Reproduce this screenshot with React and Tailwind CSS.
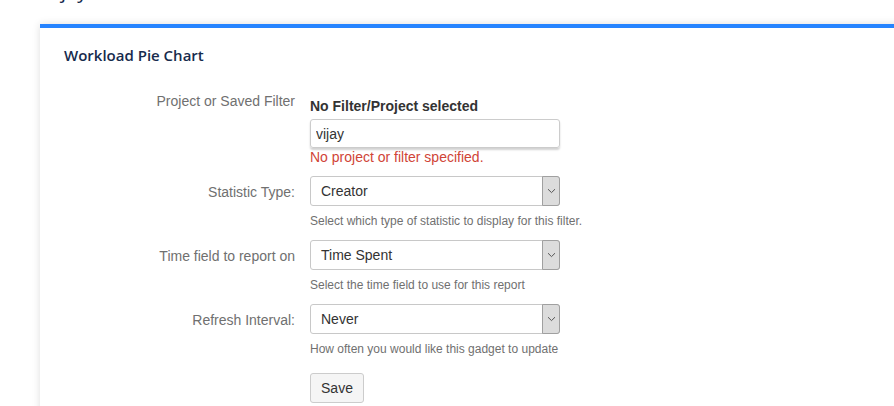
import { useState } from "react";

const Chevron = () => (
  <svg width="9" height="6" viewBox="0 0 9 6" fill="none">
    <path d="M1 1.2 L4.5 4.6 L8 1.2" stroke="#555" strokeWidth="1" />
  </svg>
);

const Select = ({ value }) => (
  <div className="flex h-[30px] w-[250px] items-stretch rounded-[3px] border border-[#c8c8c8] bg-white">
    <div className="flex flex-1 items-center pl-[10px] text-[14px] text-[#333]">{value}</div>
    <div className="my-[-1px] mr-[-1px] flex w-[18px] items-center justify-center rounded-r-[3px] border border-[#a0a0a0] bg-[#dcdcdc]">
      <Chevron />
    </div>
  </div>
);

const Row = ({ label, children, labelClass = "" }) => (
  <div className="flex">
    <div className={"w-[231px] shrink-0 text-right text-[14px] text-[#707070] " + labelClass}>{label}</div>
    <div className="ml-[15px] flex flex-col">{children}</div>
  </div>
);

const App = () => {
  const [query, setQuery] = useState("vijay");

  return (
    <div
      className="h-[406px] w-[894px] overflow-hidden bg-white"
      style={{ fontFamily: '"Liberation Sans", Arial, sans-serif' }}
    >
      <div className="h-[24px] overflow-hidden pl-[46px]">
        <div
          className="mt-[-21px] text-[20px] leading-[24px] text-[#172b4d]"
          style={{ fontFamily: '"Open Sans", sans-serif' }}
        >
          vijay
        </div>
      </div>

      <div className="ml-[40px] mr-[-20px] h-[400px] border-t-4 border-[#2684ff] bg-white pl-[24px] pt-[17px] shadow-[0_0_8px_rgba(0,0,0,0.13)]">
        <h2
          className="text-[15px] font-semibold leading-[20px] text-[#172b4d]"
          style={{ fontFamily: '"Open Sans", sans-serif' }}
        >
          Workload Pie Chart
        </h2>

        <div className="mt-[26px] flex flex-col">
          <Row label="Project or Saved Filter" labelClass="leading-[20px]">
            <div className="pt-[5px] text-[14px] font-bold leading-[20px] text-[#333]">
              No Filter/Project selected
            </div>
            <input
              value={query}
              onChange={(e) => setQuery(e.target.value)}
              className="mt-[3px] h-[29px] w-[250px] rounded-[3px] border border-[#cccccc] px-[5px] text-[14px] text-[#333] shadow-[0_2px_2px_rgba(0,0,0,0.18)] outline-none"
            />
            <div className="text-[14px] leading-[19px] text-[#d04437]">No project or filter specified.</div>
          </Row>

          <div className="mt-[9px]">
            <Row label="Statistic Type:" labelClass="leading-[30px] pt-[1px]">
              <Select value="Creator" />
              <div className="mt-[7px] text-[12px] leading-[16px] text-[#707070]">
                Select which type of statistic to display for this filter.
              </div>
            </Row>
          </div>

          <div className="mt-[11px]">
            <Row label="Time field to report on" labelClass="leading-[30px] pt-[1px]">
              <Select value="Time Spent" />
              <div className="mt-[7px] text-[12px] leading-[16px] text-[#707070]">
                Select the time field to use for this report
              </div>
            </Row>
          </div>

          <div className="mt-[11px]">
            <Row label="Refresh Interval:" labelClass="leading-[30px] pt-[1px]">
              <Select value="Never" />
              <div className="mt-[7px] text-[12px] leading-[16px] text-[#707070]">
                How often you would like this gadget to update
              </div>
            </Row>
          </div>

          <div className="mt-[16px]">
            <Row label="">
              <button className="h-[30px] w-[54px] rounded-[3px] border border-[#cccccc] bg-[#f5f5f5] text-[14px] text-[#333]">
                Save
              </button>
            </Row>
          </div>
        </div>
      </div>
    </div>
  );
};

export default App;
